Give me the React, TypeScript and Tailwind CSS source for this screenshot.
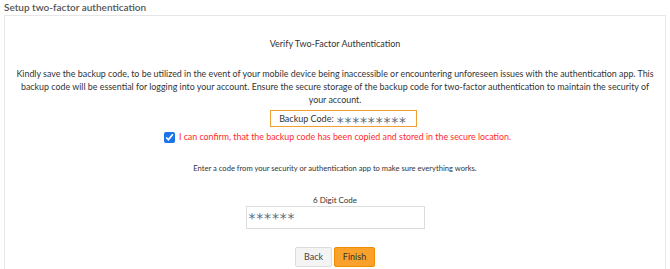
export default function App() {
  return (
    <div className="h-[269px] w-[670px] overflow-hidden bg-white font-['Lato',sans-serif] text-[#333]">
      <div className="px-[4px] pt-[1px] text-[10px] font-semibold leading-[13px] text-[#555]">
        Setup two-factor authentication
      </div>
      <div className="mx-[4px] mt-[1px] h-[260px] border border-[#e6e6e6] bg-white">
        <div className="flex flex-col items-center">
          <div className="mt-[21px] text-[9px] leading-[13px] text-[#333]">Verify Two-Factor Authentication</div>
          <p className="mt-[17px] text-center text-[8.9px] leading-[13px] text-[#333]">
            Kindly save the backup code, to be utilized in the event of your mobile device being inaccessible or
            encountering unforeseen issues with the authentication app. This
            <br />
            backup code will be essential for logging into your account. Ensure the secure storage of the backup code
            for two-factor authentication to maintain the security of
            <br />
            your account.
          </p>
          <div className="ml-[16px] mt-[4px] flex h-[17px] w-[147px] items-center justify-center border-[1.5px] border-[#f0a030] text-[9px]">
            <span>Backup Code:</span>
            <span className="ml-[3px] translate-y-[3px] font-['DejaVu_Sans',sans-serif] text-[14px] leading-[14px] tracking-[0.8px] text-[#5d6d80]">
              *********
            </span>
          </div>
          <label className="ml-[5px] mt-[4px] flex items-center gap-[4px] text-[8.85px] leading-[12px] text-[#ff2a2a]">
            <input type="checkbox" defaultChecked className="h-[11px] w-[11px] accent-[#1a73e8]" />
            I can confirm, that the backup code has been copied and stored in the secure location.
          </label>
          <div className="mt-[20px] text-[7.6px] leading-[11px] text-[#333]">
            Enter a code from your security or authentication app to make sure everything works.
          </div>
          <div className="mt-[21px] text-[8px] leading-[11px] text-[#333]">6 Digit Code</div>
          <div className="flex h-[23px] w-[179px] items-start border border-[#dcdcdc] px-[2px] pt-[4px]">
            <span className="font-['DejaVu_Sans',sans-serif] text-[14px] leading-[14px] tracking-[0.8px] text-[#5d6d80]">
              ******
            </span>
          </div>
          <div className="mt-[18px] flex gap-[2px] text-[9px]">
            <button className="h-[20px] w-[37px] rounded-[2px] border border-[#dcdcdc] bg-[#f4f4f4] text-[#444]">Back</button>
            <button className="h-[20px] w-[41px] rounded-[2px] border border-[#f08c00] bg-[#f9a12a] text-[#333]">Finish</button>
          </div>
        </div>
      </div>
    </div>
  );
}
